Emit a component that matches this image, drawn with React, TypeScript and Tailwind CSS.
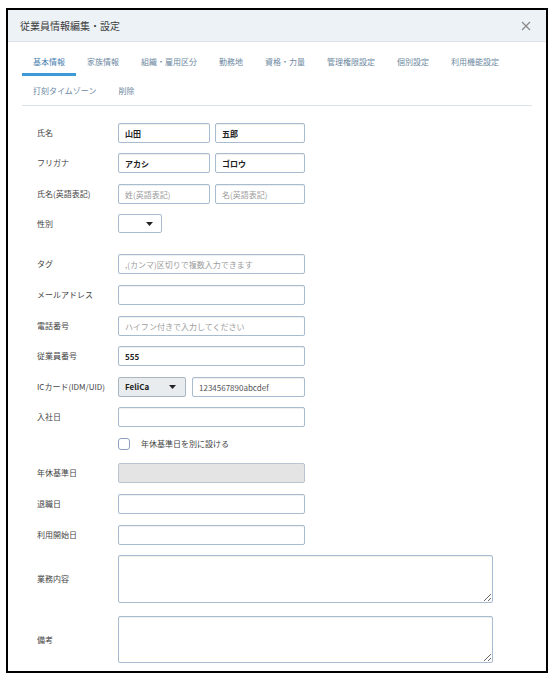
import type { ReactNode } from 'react'

const TABS = [
  '基本情報',
  '家族情報',
  '組織・雇用区分',
  '勤務地',
  '資格・力量',
  '管理権限設定',
  '個別設定',
  '利用機能設定',
  '打刻タイムゾーン',
  '削除',
]

const inputBase =
  'h-[20px] rounded-[2px] border border-[#a9bccf] bg-white px-[6px] text-[8px] text-[#222] shadow-[inset_0_1px_1px_rgba(0,0,0,0.07)] outline-none placeholder:text-[#9c9c9c] placeholder:font-normal'

function Caret() {
  return (
    <svg width="7" height="4" viewBox="0 0 7 4" className="shrink-0">
      <path d="M0 0h7L3.5 4z" fill="#222" />
    </svg>
  )
}

function Row({ label, className, children }: { label: string; className?: string; children?: ReactNode }) {
  return (
    <div className={`flex items-center ${className ?? ''}`}>
      <span className="w-[81px] shrink-0 text-[8px] leading-none text-[#444]">{label}</span>
      {children}
    </div>
  )
}

function TextInput({ w, value, placeholder, bold = true }: { w: string; value?: string; placeholder?: string; bold?: boolean }) {
  return (
    <input
      className={`${inputBase} ${w} ${bold ? 'font-semibold' : 'font-normal text-[#555]'}`}
      defaultValue={value}
      placeholder={placeholder}
    />
  )
}

export default function App() {
  return (
    <div
      className="h-[680px] w-[558px] overflow-hidden bg-white pl-[6px] pt-[8px]"
      style={{ fontFamily: '"Noto Sans CJK JP", "Noto Sans", sans-serif' }}
    >
      <div className="flex h-[665px] w-[542px] flex-col overflow-hidden border-2 border-black bg-white">
        {/* header */}
        <div className="flex h-[32px] shrink-0 items-center justify-between border-b border-[#dde3ea] bg-[#edf2f6] pl-[12px] pr-[15px]">
          <span className="text-[10px] leading-none text-[#3c3c3c]">従業員情報編集・設定</span>
          <svg width="10" height="10" viewBox="0 0 10 10">
            <path d="M1 1l8 8M9 1l-8 8" stroke="#888" strokeWidth="1.2" />
          </svg>
        </div>

        {/* tabs */}
        <div className="mx-[14px] mt-[5px] flex flex-wrap border-b border-[#dde2e7]">
          {TABS.map((t, i) => (
            <div
              key={t}
              className={`flex h-[29px] items-center px-[11px] text-[8px] leading-none ${
                i === 0
                  ? 'border-b-[3px] border-[#3d9ad6] pt-[3px] text-[#4a7fb0]'
                  : 'text-[#6d889f]'
              }`}
            >
              {t}
            </div>
          ))}
        </div>

        {/* form */}
        <div className="mx-[14px] flex flex-col px-[15px] pt-[17px]">
          <Row label="氏名">
            <div className="flex gap-[5px]">
              <TextInput w="w-[92px]" value="山田" />
              <TextInput w="w-[90px]" value="五郎" />
            </div>
          </Row>
          <Row label="フリガナ" className="mt-[10px]">
            <div className="flex gap-[5px]">
              <TextInput w="w-[92px]" value="アカシ" />
              <TextInput w="w-[90px]" value="ゴロウ" />
            </div>
          </Row>
          <Row label="氏名(英語表記)" className="mt-[11px]">
            <div className="flex gap-[5px]">
              <TextInput w="w-[92px]" placeholder="姓(英語表記)" />
              <TextInput w="w-[90px]" placeholder="名(英語表記)" />
            </div>
          </Row>
          <Row label="性別" className="mt-[10px]">
            <div className="flex h-[19px] w-[44px] items-center justify-end rounded-[2px] border border-[#a9bccf] bg-white pr-[8px]">
              <Caret />
            </div>
          </Row>

          <Row label="タグ" className="mt-[21px]">
            <TextInput w="w-[187px]" placeholder=",(カンマ)区切りで複数入力できます" />
          </Row>
          <Row label="メールアドレス" className="mt-[11px]">
            <TextInput w="w-[187px]" />
          </Row>
          <Row label="電話番号" className="mt-[11px]">
            <TextInput w="w-[187px]" placeholder="ハイフン付きで入力してください" />
          </Row>
          <Row label="従業員番号" className="mt-[10px]">
            <TextInput w="w-[187px]" value="555" />
          </Row>
          <Row label="ICカード(IDM/UID)" className="mt-[11px]">
            <div className="flex gap-[6px]">
              <div className="flex h-[20px] w-[68px] items-center justify-between rounded-[2px] border border-[#a9b6c2] bg-[#e9ecef] pl-[6px] pr-[9px]">
                <span className="text-[8px] font-semibold leading-none text-[#222]">FeliCa</span>
                <Caret />
              </div>
              <TextInput w="w-[113px]" value="1234567890abcdef" bold={false} />
            </div>
          </Row>
          <Row label="入社日" className="mt-[10px]">
            <TextInput w="w-[187px]" />
          </Row>
          <Row label="" className="mt-[11px]">
            <label className="flex items-center gap-[11px]">
              <span className="h-[12px] w-[12px] rounded-[3px] border border-[#8ea3b9] bg-white" />
              <span className="text-[8px] leading-none text-[#444]">年休基準日を別に設ける</span>
            </label>
          </Row>
          <Row label="年休基準日" className="mt-[13px]">
            <div className="h-[20px] w-[187px] rounded-[2px] border border-[#b9c5d1] bg-[#e4e4e4]" />
          </Row>
          <Row label="退職日" className="mt-[11px]">
            <TextInput w="w-[187px]" />
          </Row>
          <Row label="利用開始日" className="mt-[11px]">
            <TextInput w="w-[187px]" />
          </Row>
          <Row label="業務内容" className="mt-[10px]">
            <textarea className="block h-[48px] w-[375px] resize-y rounded-[2px] border border-[#a9bccf] bg-white shadow-[inset_0_1px_1px_rgba(0,0,0,0.07)] outline-none" />
          </Row>
          <Row label="備考" className="mt-[13px]">
            <textarea className="block h-[47px] w-[375px] resize-y rounded-[2px] border border-[#a9bccf] bg-white shadow-[inset_0_1px_1px_rgba(0,0,0,0.07)] outline-none" />
          </Row>
        </div>
      </div>
    </div>
  )
}
